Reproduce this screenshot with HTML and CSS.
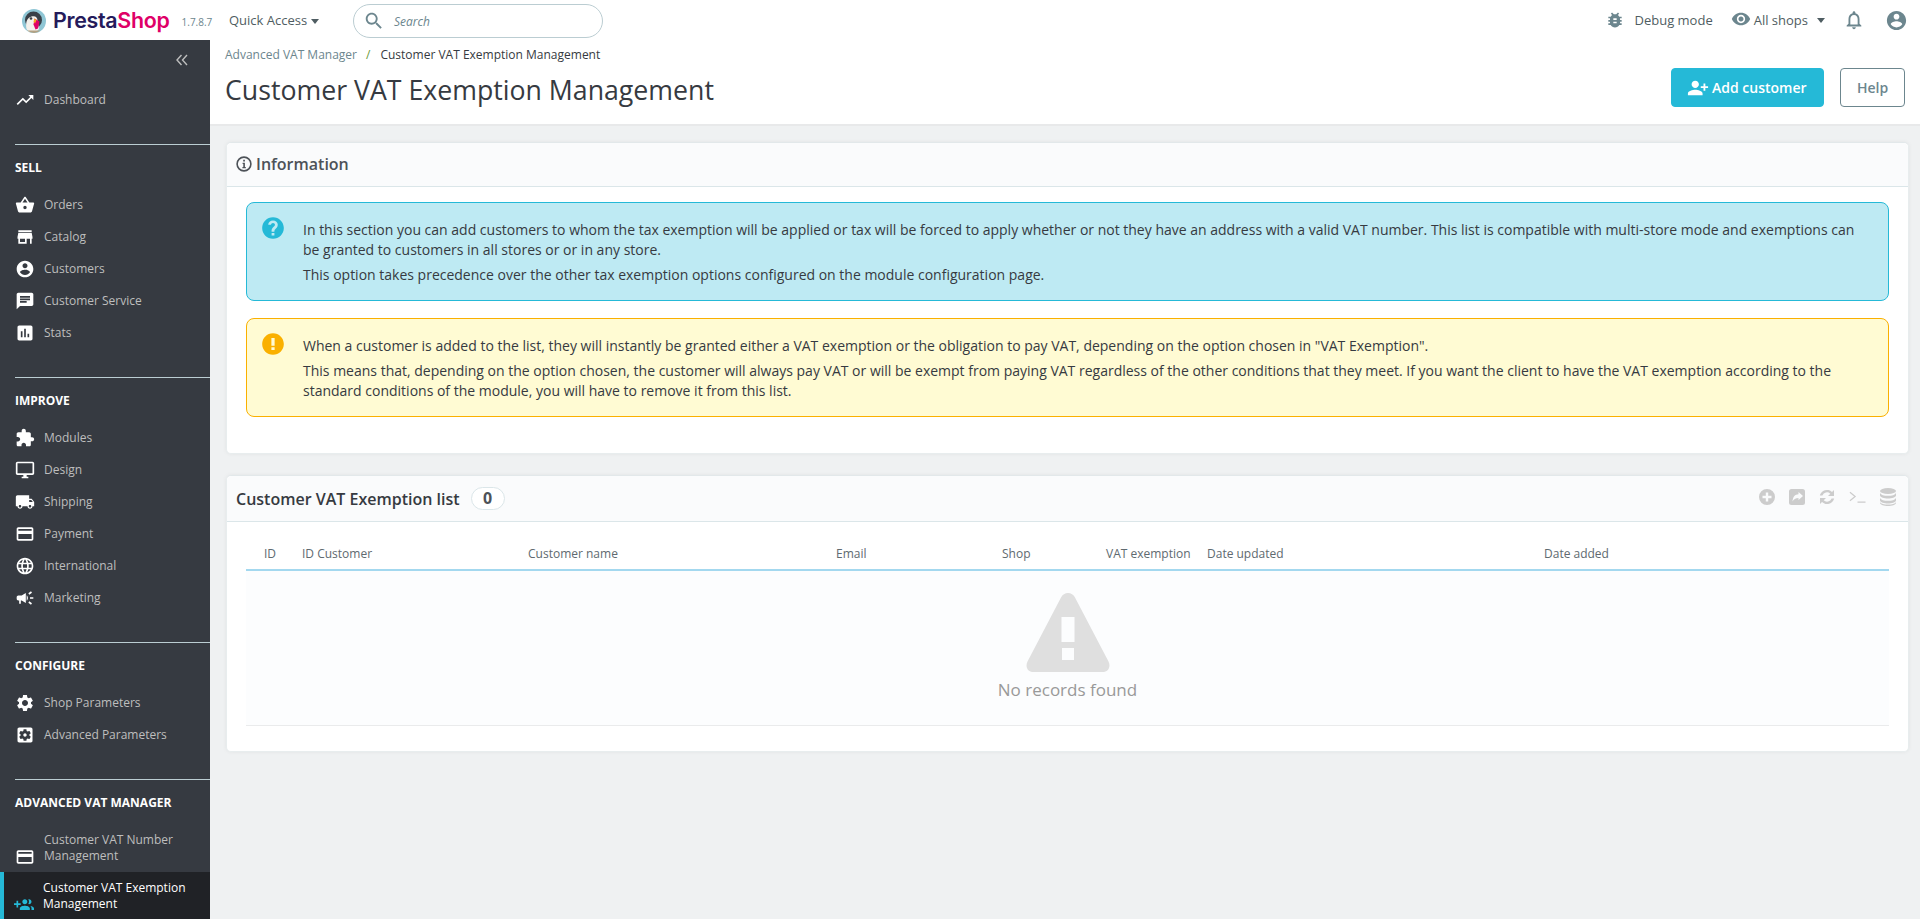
FILE: index.html
```html
<!DOCTYPE html>
<html lang="en">
<head>
<meta charset="utf-8">
<title>Customer VAT Exemption Management</title>
<link rel="stylesheet" href="styles.css">
</head>
<body>
<header class="topbar">
  <div class="logo">
    <svg class="puffin" viewBox="0 0 24 24"><circle cx="12" cy="12" r="12" fill="#8fc6d5"/><circle cx="11.500" cy="11" r="8.500" fill="#3a4048"/><path d="M4.500 20c-1-6 0-11 5-12.500 4-1 6 1 6 4l1.500 8.500-3 3H7z" fill="#f4f1ec"/><circle cx="9" cy="9.500" r="1.300" fill="#3a4048"/><path d="M12.500 9.500l5 3-1.500 7-2.500 1-2-5z" fill="#df0067"/><path d="M12.500 9.500l2 1.500-1.500 3.500-1.500-2z" fill="#f5a623"/><path d="M5 21.500h13.500A12 12 0 0 1 12 24a12 12 0 0 1-7-2.500z" fill="#b3a284"/></svg>
    <span class="logo-text"><span class="logo-dark">Presta</span><span class="logo-pink">Shop</span></span>
    <span class="version">1.7.8.7</span>
  </div>
  <div class="quick">Quick Access<span class="caret"></span></div>
  <div class="search">
    <svg class="search-icon" viewBox="0 0 24 24"><path d="M15.500 14h-.79l-.28-.27C15.410 12.590 16 11.110 16 9.500 16 5.910 13.090 3 9.500 3S3 5.910 3 9.500 5.910 16 9.500 16c1.610 0 3.090-.59 4.230-1.570l.27.28v.79l5 4.990L20.490 19l-4.990-5zm-6 0C7.010 14 5 11.990 5 9.500S7.010 5 9.500 5 14 7.010 14 9.500 11.990 14 9.500 14z"/></svg>
    <span class="search-text">Search</span>
  </div>
  <div class="top-right">
    <div class="debug">
      <svg class="top-icon" viewBox="0 0 24 24"><path d="M20 8h-2.810c-.45-.78-1.070-1.450-1.820-1.960L17 4.410 15.590 3l-2.170 2.170C12.960 5.060 12.490 5 12 5c-.49 0-.96.06-1.410.17L8.410 3 7 4.410l1.620 1.630C7.880 6.550 7.260 7.220 6.810 8H4v2h2.090c-.05.33-.09.66-.09 1v1H4v2h2v1c0 .34.04.67.09 1H4v2h2.810c1.040 1.790 2.970 3 5.190 3s4.150-1.210 5.190-3H20v-2h-2.090c.05-.33.09-.66.09-1v-1h2v-2h-2v-1c0-.34-.04-.67-.09-1H20V8zm-6 8h-4v-2h4v2zm0-4h-4v-2h4v2z"/></svg>
      <span>Debug mode</span>
    </div>
    <div class="shops">
      <svg class="eye" viewBox="0 0 24 24"><path d="M12 4.500C7 4.500 2.730 7.610 1 12c1.730 4.390 6 7.500 11 7.500s9.270-3.110 11-7.500c-1.730-4.390-6-7.500-11-7.500zM12 17c-2.760 0-5-2.240-5-5s2.240-5 5-5 5 2.240 5 5-2.240 5-5 5zm0-8c-1.660 0-3 1.340-3 3s1.340 3 3 3 3-1.340 3-3-1.340-3-3-3z"/></svg>
      <span>All shops</span><span class="caret caret-shops"></span>
    </div>
    <svg class="bell" viewBox="0 0 24 24"><path d="M12 22c1.100 0 2-.9 2-2h-4c0 1.100.9 2 2 2zm6-6v-5c0-3.070-1.630-5.640-4.500-6.320V4c0-.83-.67-1.500-1.500-1.500s-1.500.67-1.500 1.500v.68C7.640 5.360 6 7.920 6 11v5l-2 2v1h16v-1l-2-2zm-2 1H8v-6c0-2.480 1.510-4.500 4-4.500s4 2.020 4 4.500v6z"/></svg>
    <svg class="avatar" viewBox="0 0 24 24"><path d="M12 2C6.480 2 2 6.480 2 12s4.480 10 10 10 10-4.480 10-10S17.520 2 12 2zm0 3c1.660 0 3 1.340 3 3s-1.340 3-3 3-3-1.340-3-3 1.340-3 3-3zm0 14.200c-2.500 0-4.710-1.280-6-3.220.03-1.990 4-3.080 6-3.080 1.990 0 5.970 1.090 6 3.080-1.290 1.940-3.500 3.220-6 3.220z"/></svg>
  </div>
</header>

<div class="shell">
  <nav class="sidebar">
    <div class="collapse">
      <svg viewBox="0 0 16 16"><path d="M7.500 3L3 8l4.500 5M13 3L8.500 8l4.500 5" fill="none" stroke="#bebebe" stroke-width="1.400"/></svg>
    </div>
    <a class="item"><svg class="nav-icon" viewBox="0 0 24 24"><path d="M16 6l2.290 2.290-4.880 4.880-4-4L2 16.590 3.410 18l6-6 4 4 6.300-6.290L22 12V6z"/></svg><span>Dashboard</span></a>

    <section class="group">
      <h3 class="group-title">SELL</h3>
      <a class="item"><svg class="nav-icon" viewBox="0 0 24 24"><path d="M17.210 9l-4.380-6.560c-.19-.28-.51-.42-.83-.42-.32 0-.64.14-.83.43L6.790 9H2c-.55 0-1 .45-1 1 0 .09.01.18.04.27l2.540 9.270c.23.84 1 1.460 1.920 1.460h13c.92 0 1.690-.62 1.930-1.460l2.540-9.270L23 10c0-.55-.45-1-1-1h-4.790zM9 9l3-4.400L15 9H9zm3 8c-1.100 0-2-.9-2-2s.9-2 2-2 2 .9 2 2-.9 2-2 2z"/></svg><span>Orders</span></a>
      <a class="item"><svg class="nav-icon" viewBox="0 0 24 24"><path d="M20 4H4v2h16V4zm1 10v-2l-1-5H4l-1 5v2h1v6h10v-6h4v6h2v-6h1zm-9 4H6v-4h6v4z"/></svg><span>Catalog</span></a>
      <a class="item"><svg class="nav-icon" viewBox="0 0 24 24"><path d="M12 2C6.480 2 2 6.480 2 12s4.480 10 10 10 10-4.480 10-10S17.520 2 12 2zm0 3c1.660 0 3 1.340 3 3s-1.340 3-3 3-3-1.340-3-3 1.340-3 3-3zm0 14.200c-2.500 0-4.710-1.280-6-3.220.03-1.990 4-3.080 6-3.080 1.990 0 5.970 1.090 6 3.080-1.290 1.940-3.500 3.220-6 3.220z"/></svg><span>Customers</span></a>
      <a class="item"><svg class="nav-icon" viewBox="0 0 24 24"><path d="M20 2H4c-1.100 0-1.990.9-1.990 2L2 22l4-4h14c1.100 0 2-.9 2-2V4c0-1.100-.9-2-2-2zM6 9h12v2H6V9zm8 5H6v-2h8v2zm4-6H6V6h12v2z"/></svg><span>Customer Service</span></a>
      <a class="item"><svg class="nav-icon" viewBox="0 0 24 24"><path d="M19 3H5c-1.100 0-2 .9-2 2v14c0 1.100.9 2 2 2h14c1.100 0 2-.9 2-2V5c0-1.100-.9-2-2-2zM9 17H7v-7h2v7zm4 0h-2V7h2v10zm4 0h-2v-4h2v4z"/></svg><span>Stats</span></a>
    </section>

    <section class="group">
      <h3 class="group-title">IMPROVE</h3>
      <a class="item"><svg class="nav-icon" viewBox="0 0 24 24"><path d="M20.500 11H19V7c0-1.100-.9-2-2-2h-4V3.500C13 2.120 11.880 1 10.500 1S8 2.120 8 3.500V5H4c-1.100 0-1.990.9-1.990 2v3.800H3.500c1.490 0 2.700 1.210 2.700 2.700s-1.210 2.700-2.700 2.700H2V20c0 1.100.9 2 2 2h3.800v-1.500c0-1.490 1.210-2.700 2.700-2.700 1.490 0 2.700 1.210 2.700 2.700V22H17c1.100 0 2-.9 2-2v-4h1.500c1.380 0 2.500-1.120 2.500-2.500S21.880 11 20.500 11z"/></svg><span>Modules</span></a>
      <a class="item"><svg class="nav-icon" viewBox="0 0 24 24"><path d="M21 2H3c-1.100 0-2 .9-2 2v12c0 1.100.9 2 2 2h7v2H8v2h8v-2h-2v-2h7c1.100 0 2-.9 2-2V4c0-1.100-.9-2-2-2zm0 14H3V4h18v12z"/></svg><span>Design</span></a>
      <a class="item"><svg class="nav-icon" viewBox="0 0 24 24"><path d="M20 8h-3V4H3c-1.100 0-2 .9-2 2v11h2c0 1.660 1.340 3 3 3s3-1.340 3-3h6c0 1.660 1.340 3 3 3s3-1.340 3-3h2v-5l-3-4zM6 18.500c-.83 0-1.500-.67-1.500-1.500s.67-1.500 1.500-1.500 1.500.67 1.500 1.500-.67 1.500-1.500 1.500zm13.500-9l1.960 2.500H17V9.500h2.500zm-1.500 9c-.83 0-1.500-.67-1.500-1.500s.67-1.500 1.500-1.500 1.500.67 1.500 1.500-.67 1.500-1.500 1.500z"/></svg><span>Shipping</span></a>
      <a class="item"><svg class="nav-icon" viewBox="0 0 24 24"><path d="M20 4H4c-1.110 0-1.990.89-1.990 2L2 18c0 1.110.89 2 2 2h16c1.110 0 2-.89 2-2V6c0-1.110-.89-2-2-2zm0 14H4v-6h16v6zm0-10H4V6h16v2z"/></svg><span>Payment</span></a>
      <a class="item"><svg class="nav-icon" viewBox="0 0 24 24"><path d="M11.990 2C6.470 2 2 6.480 2 12s4.470 10 9.990 10C17.520 22 22 17.520 22 12S17.520 2 11.990 2zm6.930 6h-2.950c-.32-1.250-.78-2.450-1.380-3.560 1.840.63 3.370 1.910 4.330 3.560zM12 4.040c.83 1.200 1.480 2.530 1.910 3.960h-3.820c.43-1.430 1.080-2.760 1.910-3.960zM4.260 14C4.100 13.360 4 12.690 4 12s.1-1.360.26-2h3.380c-.08.66-.14 1.320-.14 2 0 .68.06 1.340.14 2H4.260zm.82 2h2.950c.32 1.250.78 2.450 1.380 3.560-1.840-.63-3.370-1.900-4.330-3.560zm2.950-8H5.080c.96-1.660 2.490-2.930 4.330-3.560C8.810 5.550 8.350 6.750 8.030 8zM12 19.960c-.83-1.200-1.480-2.530-1.910-3.960h3.820c-.43 1.430-1.080 2.760-1.910 3.960zM14.340 14H9.660c-.09-.66-.16-1.320-.16-2 0-.68.07-1.350.16-2h4.680c.09.65.16 1.320.16 2 0 .68-.07 1.340-.16 2zm.25 5.560c.6-1.110 1.060-2.310 1.380-3.560h2.950c-.96 1.650-2.490 2.930-4.330 3.560zM16.360 14c.08-.66.14-1.320.14-2 0-.68-.06-1.340-.14-2h3.380c.16.64.26 1.310.26 2s-.1 1.360-.26 2h-3.380z"/></svg><span>International</span></a>
      <a class="item"><svg class="nav-icon" viewBox="0 0 24 24"><path d="M18 11v2h4v-2h-4zm-2 6.610c.96.71 2.210 1.650 3.200 2.390.4-.53.8-1.070 1.200-1.600-.99-.74-2.240-1.680-3.200-2.400-.4.54-.8 1.080-1.200 1.610zM20.400 5.600c-.4-.53-.8-1.070-1.200-1.600-.99.74-2.240 1.680-3.200 2.400.4.53.8 1.070 1.200 1.600.96-.72 2.210-1.650 3.200-2.400zM4 9c-1.100 0-2 .9-2 2v2c0 1.100.9 2 2 2h1v4h2v-4h1l5 3V6L8 9H4zm11.500 3c0-1.330-.58-2.530-1.500-3.350v6.690c.92-.81 1.500-2.010 1.500-3.340z"/></svg><span>Marketing</span></a>
    </section>

    <section class="group">
      <h3 class="group-title">CONFIGURE</h3>
      <a class="item"><svg class="nav-icon" viewBox="0 0 24 24"><path d="M19.140 12.940c.04-.3.06-.61.06-.94 0-.32-.02-.64-.07-.94l2.030-1.580c.18-.14.23-.41.12-.61l-1.920-3.320c-.12-.22-.37-.29-.59-.22l-2.390.96c-.5-.38-1.030-.7-1.620-.94l-.36-2.540c-.04-.24-.24-.41-.48-.41h-3.840c-.24 0-.43.17-.47.41l-.36 2.540c-.59.24-1.130.57-1.620.94l-2.390-.96c-.22-.08-.47 0-.59.22L2.740 8.870c-.12.21-.08.47.12.61l2.030 1.580c-.05.3-.09.63-.09.94s.02.64.07.94l-2.030 1.580c-.18.14-.23.41-.12.61l1.920 3.320c.12.22.37.29.59.22l2.390-.96c.5.38 1.030.7 1.620.94l.36 2.540c.05.24.24.41.48.41h3.840c.24 0 .44-.17.47-.41l.36-2.540c.59-.24 1.130-.56 1.620-.94l2.390.96c.22.08.47 0 .59-.22l1.920-3.320c.12-.22.07-.47-.12-.61l-2.010-1.580zM12 15.600c-1.980 0-3.600-1.620-3.600-3.600s1.620-3.600 3.600-3.600 3.600 1.620 3.600 3.600-1.620 3.600-3.600 3.600z"/></svg><span>Shop Parameters</span></a>
      <a class="item"><svg class="nav-icon" viewBox="0 0 24 24"><path d="M12 10c-1.100 0-2 .9-2 2s.9 2 2 2 2-.9 2-2-.9-2-2-2zm7-7H5c-1.110 0-2 .9-2 2v14c0 1.100.89 2 2 2h14c1.110 0 2-.9 2-2V5c0-1.100-.89-2-2-2zm-1.750 9c0 .23-.02.46-.05.68l1.480 1.160c.13.11.17.3.08.45l-1.400 2.420c-.09.15-.27.21-.43.15l-1.740-.7c-.36.28-.76.51-1.180.69l-.26 1.850c-.03.17-.18.3-.35.3h-2.800c-.17 0-.32-.13-.35-.29l-.26-1.850c-.43-.18-.82-.41-1.180-.69l-1.740.7c-.16.06-.34 0-.43-.15l-1.400-2.420c-.09-.15-.05-.34.08-.45l1.480-1.160c-.03-.23-.05-.46-.05-.69 0-.23.02-.46.05-.68l-1.480-1.160c-.13-.11-.17-.3-.08-.45l1.400-2.420c.09-.15.27-.21.43-.15l1.740.7c.36-.28.76-.51 1.180-.69l.26-1.850c.03-.17.18-.3.35-.3h2.800c.17 0 .32.13.35.29l.26 1.850c.43.18.82.41 1.180.69l1.740-.7c.16-.06.34 0 .43.15l1.400 2.420c.09.15.05.34-.08.45l-1.480 1.160c.03.23.05.46.05.69z"/></svg><span>Advanced Parameters</span></a>
    </section>

    <section class="group">
      <h3 class="group-title">ADVANCED VAT MANAGER</h3>
      <a class="item item-multi"><svg class="nav-icon" viewBox="0 0 24 24"><path d="M20 4H4c-1.110 0-1.990.89-1.990 2L2 18c0 1.110.89 2 2 2h16c1.110 0 2-.89 2-2V6c0-1.110-.89-2-2-2zm0 14H4v-6h16v6zm0-10H4V6h16v2z"/></svg><span>Customer VAT Number Management</span></a>
      <a class="item item-multi item-active"><svg class="nav-icon" viewBox="0 0 24 24"><path d="M8 10H5V7H3v3H0v2h3v3h2v-3h3v-2zm10 1c1.660 0 2.990-1.340 2.990-3S19.660 5 18 5c-.32 0-.63.05-.91.14.57.81.9 1.790.9 2.860s-.34 2.040-.9 2.860c.28.09.59.14.91.14zm-5 0c1.660 0 2.990-1.340 2.990-3S14.660 5 13 5s-3 1.340-3 3 1.340 3 3 3zm6.620 2.160c.83.73 1.380 1.660 1.380 2.840v2h3v-2c0-1.540-2.370-2.490-4.380-2.840zM13 13c-2 0-6 1-6 3v2h12v-2c0-2-4-3-6-3z"/></svg><span>Customer VAT Exemption Management</span></a>
    </section>
  </nav>

  <main class="main">
    <div class="toolbar">
      <div class="toolbar-left">
        <div class="breadcrumb"><span class="crumb">Advanced VAT Manager</span><span class="crumb-sep">/</span><span class="crumb-current">Customer VAT Exemption Management</span></div>
        <h1 class="page-title">Customer VAT Exemption Management</h1>
      </div>
      <div class="toolbar-actions">
        <button class="btn btn-primary"><svg class="btn-icon" viewBox="0 0 24 24"><path d="M9 12c-2.210 0-4-1.790-4-4s1.790-4 4-4 4 1.790 4 4-1.790 4-4 4zm9-2V7h2v3h3v2h-3v3h-2v-3h-3v-2h3zm-9 4c2.670 0 8 1.340 8 4v2H1v-2c0-2.660 5.330-4 8-4z"/></svg>Add customer</button>
        <button class="btn btn-outline">Help</button>
      </div>
    </div>

    <div class="content">
      <section class="card card-info">
        <div class="card-head">
          <svg class="info-icon" viewBox="0 0 16 16"><circle cx="8" cy="8" r="6.900" fill="none" stroke="#4d5258" stroke-width="1.600"/><path d="M6.600 6.700h2.300v4.300h.9v1.200H6.400V11h.9V7.900h-.7zM7.200 3.800h1.700v1.800H7.200z" fill="#4d5258"/></svg>
          <span class="card-title card-title-info">Information</span>
        </div>
        <div class="card-body">
          <div class="alert alert-info">
            <svg class="alert-icon" viewBox="0 0 24 24"><path d="M12 2C6.480 2 2 6.480 2 12s4.480 10 10 10 10-4.480 10-10S17.520 2 12 2zm1.300 17h-2.600v-2.500h2.600zm2.300-7.500l-.9.900c-.9.900-1.400 1.500-1.400 2.600v.5h-2.600v-.9c0-1.200.5-2.200 1.200-3l1.400-1.400c.3-.3.500-.7.500-1.200 0-.9-.8-1.600-1.800-1.600s-1.800.7-1.800 1.600H7.600C7.600 6.600 9.500 5 12 5s4.400 1.600 4.400 4c0 1-.3 1.800-.8 2.500z"/></svg>
            <div class="alert-text">
              <p>In this section you can add customers to whom the tax exemption will be applied or tax will be forced to apply whether or not they have an address with a valid VAT number. This list is compatible with multi-store mode and exemptions can be granted to customers in all stores or or in any store.</p>
              <p>This option takes precedence over the other tax exemption options configured on the module configuration page.</p>
            </div>
          </div>
          <div class="alert alert-warning">
            <svg class="alert-icon" viewBox="0 0 24 24"><path d="M12 2C6.480 2 2 6.480 2 12s4.480 10 10 10 10-4.480 10-10S17.520 2 12 2zm1.500 15.500h-3V15h3zm0-4h-3V6.500h3z"/></svg>
            <div class="alert-text">
              <p>When a customer is added to the list, they will instantly be granted either a VAT exemption or the obligation to pay VAT, depending on the option chosen in "VAT Exemption".</p>
              <p>This means that, depending on the option chosen, the customer will always pay VAT or will be exempt from paying VAT regardless of the other conditions that they meet. If you want the client to have the VAT exemption according to the standard conditions of the module, you will have to remove it from this list.</p>
            </div>
          </div>
        </div>
      </section>

      <section class="card card-list">
        <div class="card-head card-head-list">
          <span class="card-title">Customer VAT Exemption list</span>
          <span class="badge">0</span>
          <div class="list-tools">
            <svg class="tool" viewBox="0 0 16 16"><path d="M8 0a8 8 0 1 0 0 16A8 8 0 0 0 8 0zm4.500 9.200H9.200v3.300H6.800V9.200H3.500V6.800h3.300V3.500h2.400v3.300h3.300z"/></svg>
            <svg class="tool" viewBox="0 0 16 16"><path d="M2.500 0h11A2.500 2.500 0 0 1 16 2.500v11a2.500 2.500 0 0 1-2.500 2.500h-11A2.500 2.500 0 0 1 0 13.500v-11A2.500 2.500 0 0 1 2.500 0zM9.500 3v2.200C6 5.400 4 7.500 3.500 12.500c1.200-2.500 3-3.500 6-3.600V11L14 7z"/></svg>
            <svg class="tool" viewBox="0 0 16 16"><path d="M15 1v6H9l2.300-2.300A4.900 4.900 0 0 0 3.400 6.500H.8A7.400 7.400 0 0 1 13 2.900zM1 15V9h6l-2.300 2.300a4.900 4.900 0 0 0 7.900-1.800h2.600A7.400 7.400 0 0 1 3 13.100z"/></svg>
            <svg class="tool tool-wide" viewBox="0 0 18 16"><path d="M1 3l5.500 4.500L1 12M9 13.500h8.500" fill="none" stroke="#ccc" stroke-width="1.300"/></svg>
            <svg class="tool tool-tall" viewBox="0 0 16 18"><ellipse cx="8" cy="3" rx="8" ry="3"/><path d="M0 5c1 2 4 2.800 8 2.800S15 7 16 5v2.600c-.5 2-4 3-8 3S.5 9.600 0 7.600zM0 10c1 2 4 2.800 8 2.800s7-.8 8-2.800v2.600c-.5 2-4 3-8 3s-7.500-1-8-3zM0 14.200c1 1.600 4 2.400 8 2.400s7-.8 8-2.400V15c-.5 2-4 3-8 3s-7.500-1-8-3z"/></svg>
          </div>
        </div>
        <div class="card-body card-body-list">
          <table class="table">
            <colgroup><col class="c1"><col class="c2"><col class="c3"><col class="c4"><col class="c5"><col class="c6"><col class="c7"><col class="c8"></colgroup>
            <thead>
              <tr><th>ID</th><th>ID Customer</th><th>Customer name</th><th>Email</th><th>Shop</th><th>VAT exemption</th><th>Date updated</th><th>Date added</th></tr>
            </thead>
            <tbody>
              <tr>
                <td colspan="8" class="empty">
                  <svg class="empty-icon" viewBox="0 0 84 79"><path d="M42 0c3 0 5.500 1.700 7 4.500l33.500 64c2.500 5 0 10.500-6 10.500H7.500c-6 0-8.500-5.500-6-10.500L35 4.500C36.500 1.700 39 0 42 0zM35.500 24v25h13V24zM36 55v12h12V55z" fill-rule="evenodd"/></svg>
                  <div class="empty-text">No records found</div>
                </td>
              </tr>
            </tbody>
          </table>
        </div>
      </section>
    </div>
  </main>
</div>
</body>
</html>
```

FILE: styles.css
```css
* { box-sizing: border-box; }
html, body { margin: 0; height: 100%; }
body {
  font-family: "Open Sans", "Liberation Sans", sans-serif;
  font-size: 14px;
  color: #363a41;
  background: #eff1f2;
  overflow: hidden;
}
svg { display: block; flex: none; }

/* top bar */
.topbar {
  height: 40px;
  background: #fff;
  display: flex;
  align-items: center;
  padding-left: 22px;
}
.logo { display: flex; align-items: center; width: 207px; flex: none; }
.puffin { width: 24px; height: 24px; margin-top: 1px; }
.logo-text {
  font-family: "Inter", "Open Sans", sans-serif;
  font-size: 21.400px;
  font-weight: 600;
  letter-spacing: -0.3px;
  margin-left: 7px;
  line-height: 28px;
  margin-top: -1px;
}
.logo-dark { color: #251b5b; }
.logo-pink { color: #df0067; }
.version { font-size: 10px; color: #6c868e; margin-left: 12px; margin-top: 3px; }
.quick { font-size: 13px; color: #4f5d62; display: flex; align-items: center; width: 124px; flex: none; }
.caret {
  width: 0; height: 0;
  border-left: 4.500px solid transparent;
  border-right: 4.500px solid transparent;
  border-top: 5px solid #4f5d62;
  margin-left: 4px;
  margin-top: 2px;
}
.search {
  width: 250px;
  height: 34px;
  margin-top: 2px;
  border: 1px solid #bbcdd2;
  border-radius: 17px;
  display: flex;
  align-items: center;
  padding-left: 9px;
}
.search-icon { width: 22px; height: 22px; fill: #6c868e; }
.search-text { font-size: 12px; font-style: italic; color: #6c868e; margin-left: 9px; }
.top-right { margin-left: auto; display: flex; align-items: center; font-size: 13px; color: #4f5d62; padding-right: 12px; }
.debug { display: flex; align-items: center; margin-right: 18px; }
.top-icon { width: 20px; height: 20px; fill: #6c868e; margin-right: 9px; }
.shops { display: flex; align-items: center; margin-right: 18px; }
.eye { width: 20px; height: 20px; fill: #6c868e; margin-right: 3px; margin-top: -3px; }
.caret-shops { margin-left: 9px; margin-top: 0; }
.bell { width: 22px; height: 22px; fill: #6c868e; margin-right: 20px; }
.avatar { width: 23px; height: 23px; fill: #6c868e; }

/* layout */
.shell { display: flex; height: 879px; overflow: hidden; }

/* sidebar */
.sidebar { width: 210px; flex: none; background: #363a41; color: #bebebe; font-size: 12px; overflow: hidden; }
.collapse { height: 44px; display: flex; justify-content: flex-end; align-items: flex-start; padding: 12px 20px 0 0; }
.collapse svg { width: 16px; height: 16px; }
.item {
  display: flex;
  align-items: center;
  height: 32px;
  padding-left: 15px;
  line-height: 16px;
  color: #bebebe;
}
.nav-icon { width: 20px; height: 20px; fill: #fff; margin-right: 9px; }
.item-multi { align-items: flex-end; height: 48px; padding-bottom: 6px; padding-top: 8px; }
.item-multi .nav-icon { margin-bottom: -1px; }
.item-multi span { width: 150px; margin-bottom: 2px; }
.item-active {
  background: #202226;
  border-left: 4px solid #25b9d7;
  padding-left: 10px;
  color: #fff;
}
.item-active .nav-icon { fill: #25b9d7; margin-right: 9px; }
.group { margin-top: 28px; margin-left: 15px; border-top: 1px solid #bbcdd2; }
.group .item { margin-left: -15px; }
.group-title {
  margin: 0;
  height: 44px;
  line-height: 46px;
  font-size: 12px;
  font-weight: 700;
  color: #fff;
}

/* main */
.main { flex: 1; min-width: 0; }
.toolbar {
  height: 86px;
  background: #fff;
  border-bottom: 2px solid #e8e9ea;
  display: flex;
  justify-content: space-between;
  padding-left: 15px;
}
.breadcrumb { font-size: 12px; line-height: 16px; padding-top: 7px; color: #6c868e; }
.crumb-sep { color: #6c9a3a; margin: 0 10px 0 9px; }
.crumb-current { color: #363a41; }
.page-title { margin: 8px 0 0; font-size: 26.700px; font-weight: 400; line-height: 38px; color: #363a41; }
.toolbar-actions { display: flex; align-items: flex-start; gap: 16px; padding: 28px 15px 0 0; }
.btn {
  height: 39px;
  border-radius: 4px;
  font-family: inherit;
  font-size: 14px;
  font-weight: 600;
  display: flex;
  align-items: center;
  padding: 0 16px;
}
.btn-primary { background: #25b9d7; border: 1px solid #25b9d7; color: #fff; padding: 0 16px 0 15px; width: 153px; }
.btn-icon { width: 22px; height: 22px; fill: #fff; margin-right: 3px; }
.btn-outline { background: #fff; border: 1px solid #6c868e; color: #6c868e; width: 65px; justify-content: center; }

.content { padding: 16px 11px 0 16px; }
.card {
  background: #fff;
  border-radius: 5px;
  box-shadow: 0 0 4px rgba(0, 0, 0, .06);
  border: 1px solid #e8edee;
  border-top-color: #e2e8ea;
}
.card-info { height: 312px; }
.card-list { height: 277px; margin-top: 21px; }
.card-head {
  height: 44px;
  background: #fafbfc;
  border-bottom: 1px solid #dbe6e9;
  display: flex;
  align-items: center;
  padding-left: 9px;
  border-radius: 5px 5px 0 0;
}
.card-head-list { height: 46px; }
.info-icon { width: 16px; height: 16px; margin-right: 4px; margin-top: -1px; }
.card-title { font-size: 16px; font-weight: 600; color: #363a41; }
.card-title-info { color: #4d5258; margin-top: -2px; }
.badge {
  margin-left: 11px;
  width: 34px;
  height: 23px;
  border: 1px solid #dbe6e9;
  border-radius: 12px;
  background: #fff;
  text-align: center;
  line-height: 21px;
  font-weight: 700;
  font-size: 16px;
  color: #4d5258;
}
.list-tools { margin-left: auto; display: flex; align-items: center; gap: 14px; padding-right: 12px; margin-top: -3px; }
.tool { width: 16px; height: 16px; fill: #ccc; }
.tool-wide { width: 17px; }
.tool-tall { height: 18px; }

.card-body { padding: 15px 19px 0; }
.alert {
  display: flex;
  border: 1px solid;
  border-radius: 8px;
  height: 99px;
  padding: 13px 30px 0 13px;
  margin-bottom: 17px;
}
.alert-info { background: #beeaf3; border-color: #25b9d7; }
.alert-warning { background: #fffbd3; border-color: #fab000; }
.alert-icon { width: 26px; height: 26px; margin-right: 17px; margin-top: -1px; }
.alert-info .alert-icon { fill: #25b9d7; }
.alert-warning .alert-icon { fill: #fab000; }
.alert-text { padding-top: 4px; font-size: 14px; line-height: 20px; color: #363a41; }
.alert-text p { margin: 0 0 5px; }

.card-body-list { padding-top: 0; }
.table { width: 1643px; border-collapse: collapse; table-layout: fixed; }
.c1 { width: 38px; }
.c2 { width: 226px; }
.c3 { width: 308px; }
.c4 { width: 166px; }
.c5 { width: 104px; }
.c6 { width: 101px; }
.c7 { width: 337px; }
.c8 { width: 363px; }
.table th {
  height: 48px;
  padding: 16px 0 0 18px;
  text-align: left;
  font-size: 12px;
  font-weight: 400;
  color: #606a70;
  white-space: nowrap;
  border-bottom: 2px solid #a3d8ef;
}
.empty {
  height: 155px;
  background: #fcfdfe;
  border-bottom: 1px solid #eaebec;
  text-align: center;
  padding: 22px 0 0;
  vertical-align: top;
}
.empty-icon { width: 84px; height: 79px; fill: #dfdfdf; margin: 0 auto; }
.empty-text { font-size: 17px; color: #999; line-height: 24px; margin-top: 6px; }
```
